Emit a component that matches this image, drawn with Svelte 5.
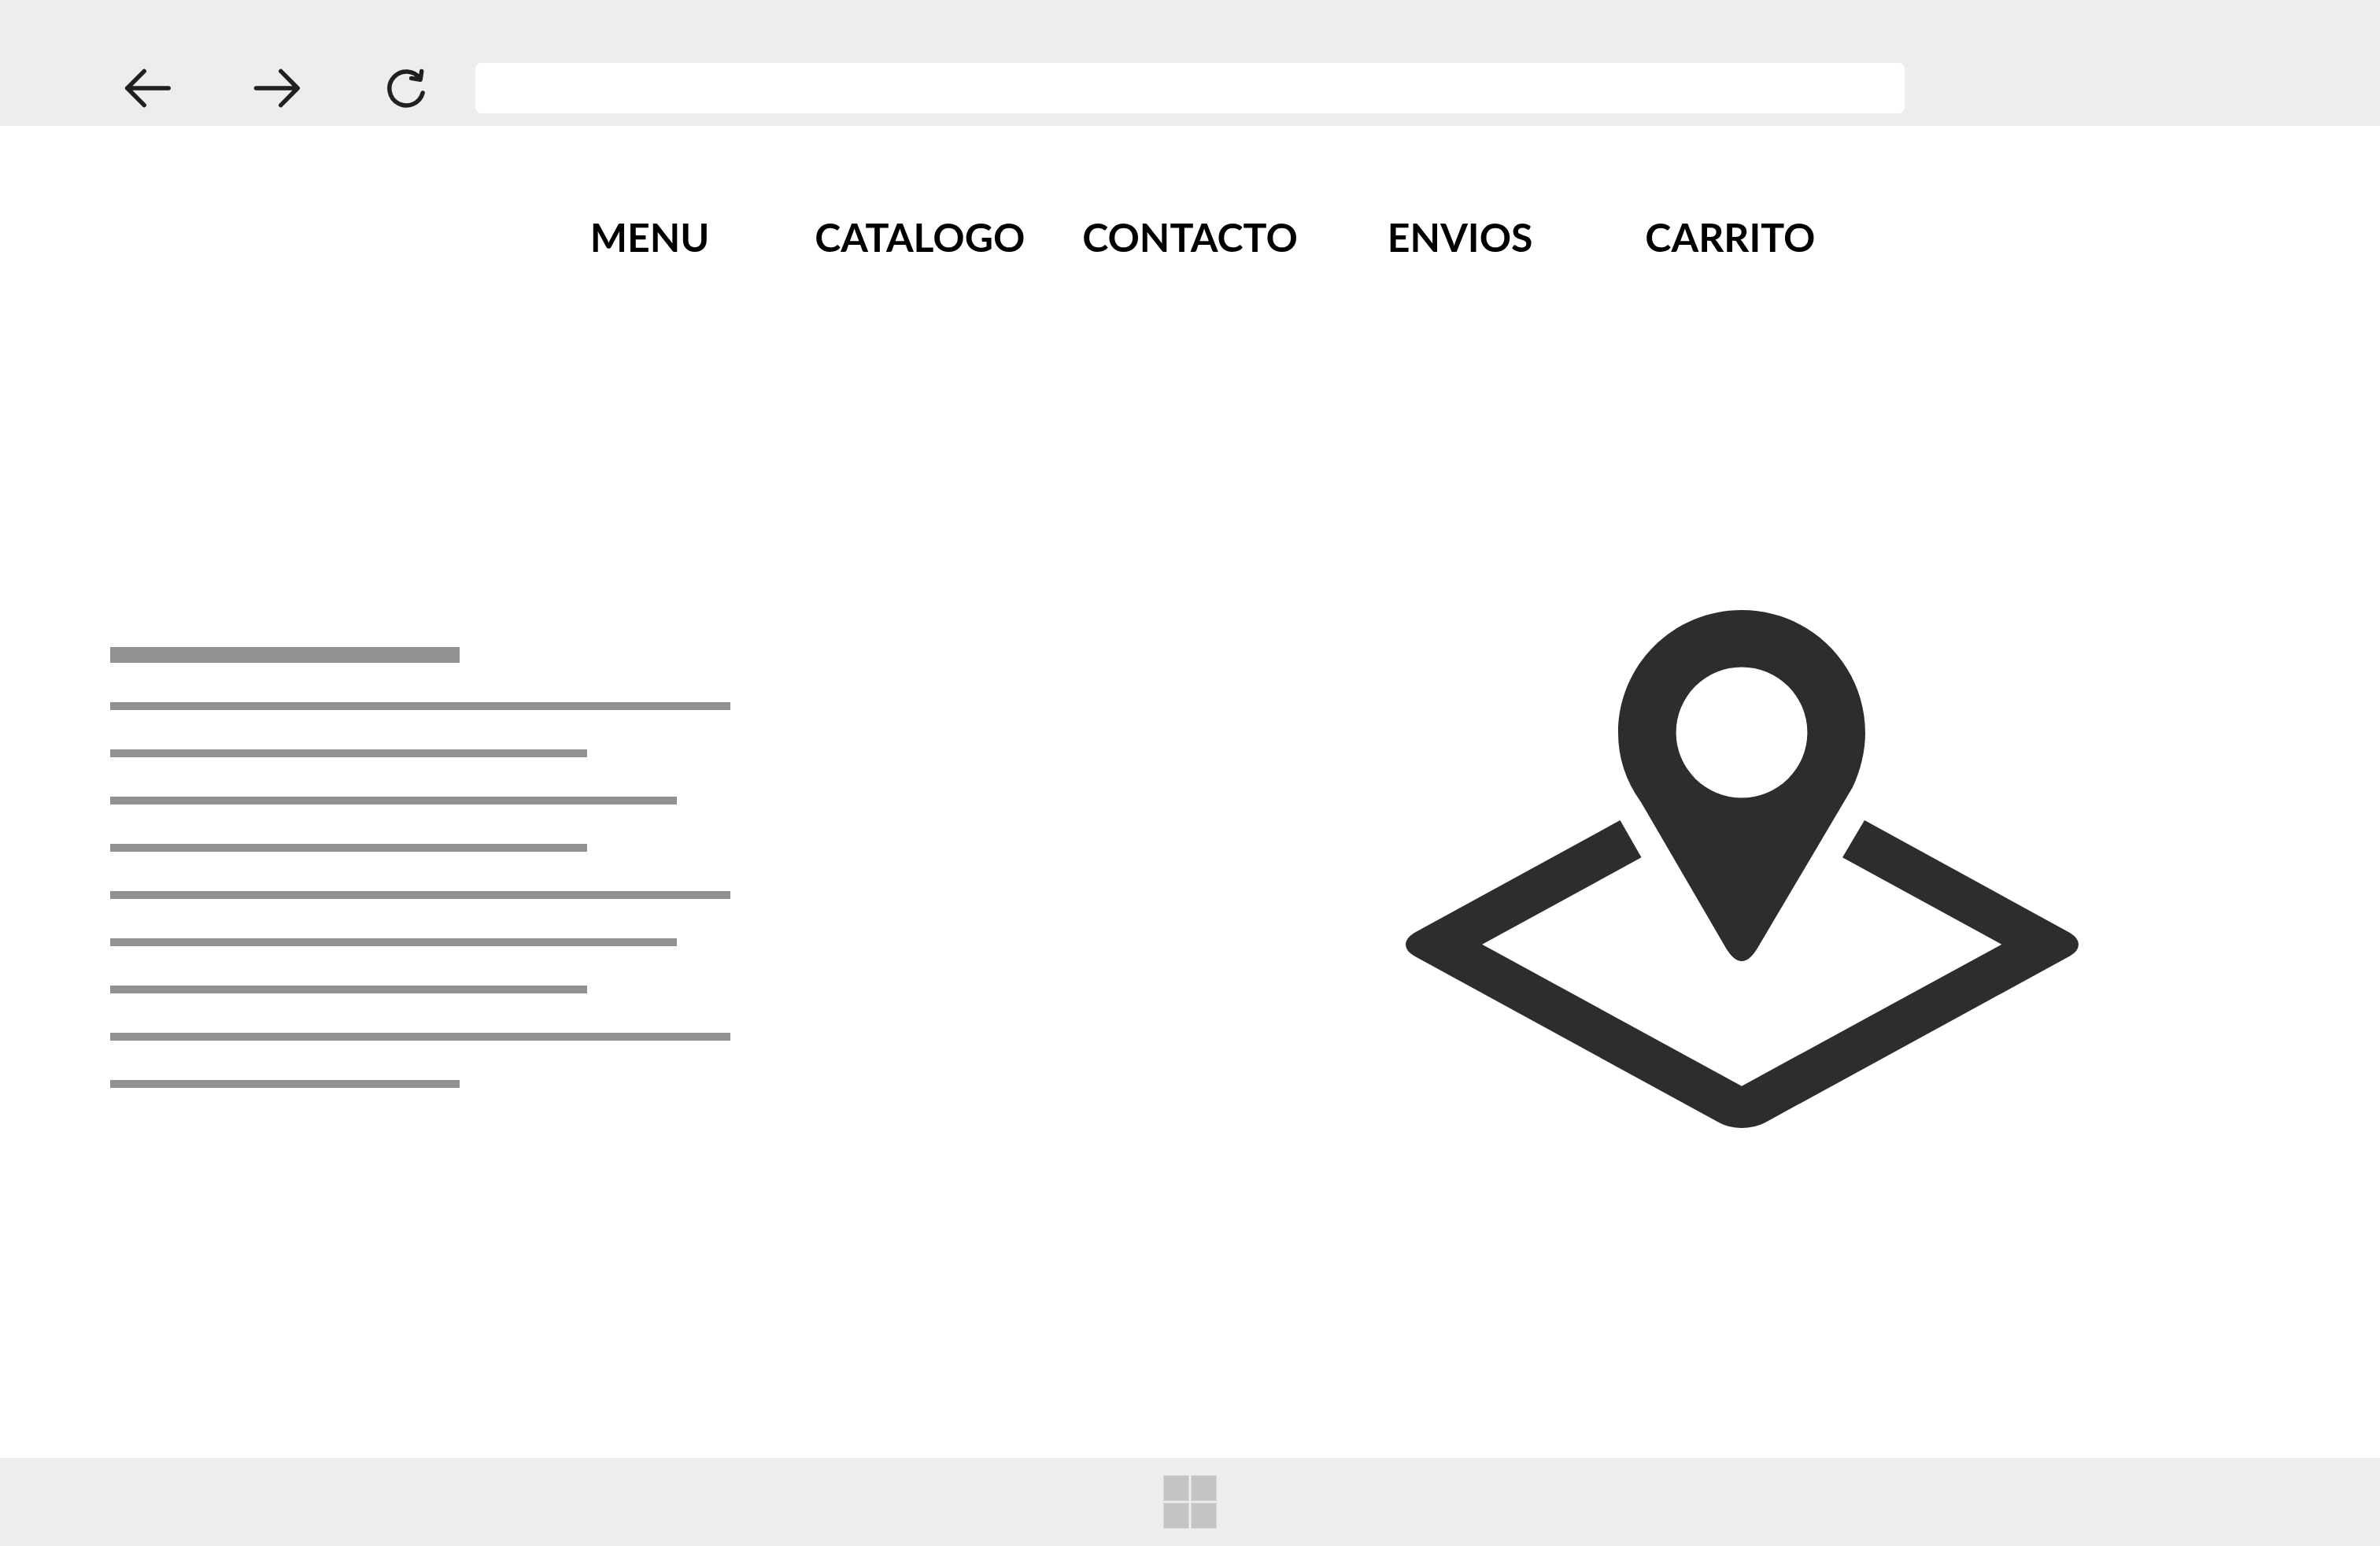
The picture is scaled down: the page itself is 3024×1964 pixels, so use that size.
<script lang="ts">
  const links = ['MENU', 'CATALOGO', 'CONTACTO', 'ENVIOS', 'CARRITO'];
  const lines = [444, 788, 606, 720, 606, 788, 720, 606, 788, 444];
</script>

<div class="screen">
  <header class="toolbar">
    <div class="controls">
      <button type="button" aria-label="Back">
        <svg viewBox="0 0 64 64"><path d="M58.2 32H5.6M27.2 10.4L5.8 32L27.2 53.6" /></svg>
      </button>
      <button type="button" aria-label="Forward">
        <svg viewBox="0 0 64 64"><path d="M5.4 32H58.2M36.8 10.4L58.2 32L36.8 53.6" /></svg>
      </button>
      <button type="button" aria-label="Reload">
        <svg viewBox="0 0 64 64">
          <path d="M53.1 38A21.5 21.5 0 1 1 50 20.2M51.7 10.4L50.2 21.2L38.6 19.4" />
        </svg>
      </button>
    </div>
    <input class="address" type="text" aria-label="Address" />
  </header>

  <nav aria-label="Principal">
    {#each links as link}
      <a href="#{link.toLowerCase()}">{link}</a>
    {/each}
  </nav>

  <main>
    <div class="copy">
      {#each lines as width, i}
        <div class="line" class:heading={i === 0} style="width: {width}px"></div>
      {/each}
    </div>
    <svg class="map" viewBox="0 -4 856 664" role="img" aria-label="Mapa">
      <path
        fill-rule="evenodd"
        d="M428 1C515 1 585 71 585 157C585 180 579 205 569 226L448 430.500Q438 447 428 447Q418 447 408 430.500L300 245Q271 205 271 157C271 71 341 1 428 1ZM428 73.500A83.400 83 0 1 0 428 239.500A83.400 83 0 1 0 428 73.500Z"
      />
      <path
        d="M273.500 268L300.500 315.300L98.200 425.700L428 605.700L758.300 425.700L556 315.300L584 268L845 411Q856 418 856 425.700Q856 434 845 440.500L457 652.500Q444 659 428 659Q412 659 400 652.500L12 440.500Q1 434 1 425.700Q1 418 12 411Z"
      />
    </svg>
  </main>

  <footer class="taskbar">
    <button type="button" aria-label="Start">
      <svg viewBox="0 0 68 68">
        <rect class="edge" width="33" height="33" />
        <rect class="edge" x="35" width="33" height="33" />
        <rect class="edge" y="35" width="33" height="33" />
        <rect class="edge" x="35" y="35" width="33" height="33" />
        <rect x="1" y="1" width="31" height="31" />
        <rect x="36" y="1" width="31" height="31" />
        <rect x="1" y="36" width="31" height="31" />
        <rect x="36" y="36" width="31" height="31" />
      </svg>
    </button>
  </footer>
</div>

<style>
  :global(body) {
    margin: 0;
    background: #fff;
  }

  .screen {
    min-height: 100vh;
    display: flex;
    flex-direction: column;
    font-family: Lato, 'Open Sans', sans-serif;
  }

  button {
    padding: 0;
    border: 0;
    background: none;
    cursor: pointer;
  }

  svg {
    display: block;
  }

  .toolbar {
    display: grid;
    grid-template-columns: 604px minmax(0, 1fr) 604px;
    padding: 80px 0 16px;
    background: #ededed;
  }

  .controls {
    display: flex;
    gap: 100px;
    padding-left: 156px;
  }

  .controls button,
  .controls svg {
    width: 64px;
    height: 64px;
  }

  .controls path {
    fill: none;
    stroke: #202020;
    stroke-width: 5.500;
    stroke-linecap: round;
    stroke-linejoin: round;
  }

  .address {
    box-sizing: border-box;
    width: 100%;
    height: 64px;
    padding: 0 24px;
    border: 0;
    border-radius: 8px;
    background: #fff;
    font: inherit;
    font-size: 28px;
  }

  nav {
    display: grid;
    grid-template-columns: repeat(5, minmax(0, 1fr));
    width: 1716px;
    max-width: 100%;
    margin: 0 auto;
    padding: 111px 0 20px;
  }

  nav a {
    color: #000;
    font-size: 50px;
    font-weight: 700;
    line-height: 60px;
    text-align: center;
    text-decoration: none;
  }

  main {
    flex: 1;
    display: flex;
    align-items: center;
    justify-content: space-between;
    padding: 0 383px 0 140px;
  }

  .copy {
    display: flex;
    flex-direction: column;
    gap: 50px;
  }

  .line {
    height: 10px;
    background: #919191;
  }

  .heading {
    height: 20px;
  }

  .map {
    width: 856px;
    fill: #2d2d2d;
  }

  .taskbar {
    display: flex;
    justify-content: center;
    padding: 22px 0;
    background: #ededed;
  }

  .taskbar button,
  .taskbar svg {
    width: 68px;
    height: 68px;
    fill: #c4c4c4;
  }

  .edge {
    fill: #d8d8d8;
  }
</style>
